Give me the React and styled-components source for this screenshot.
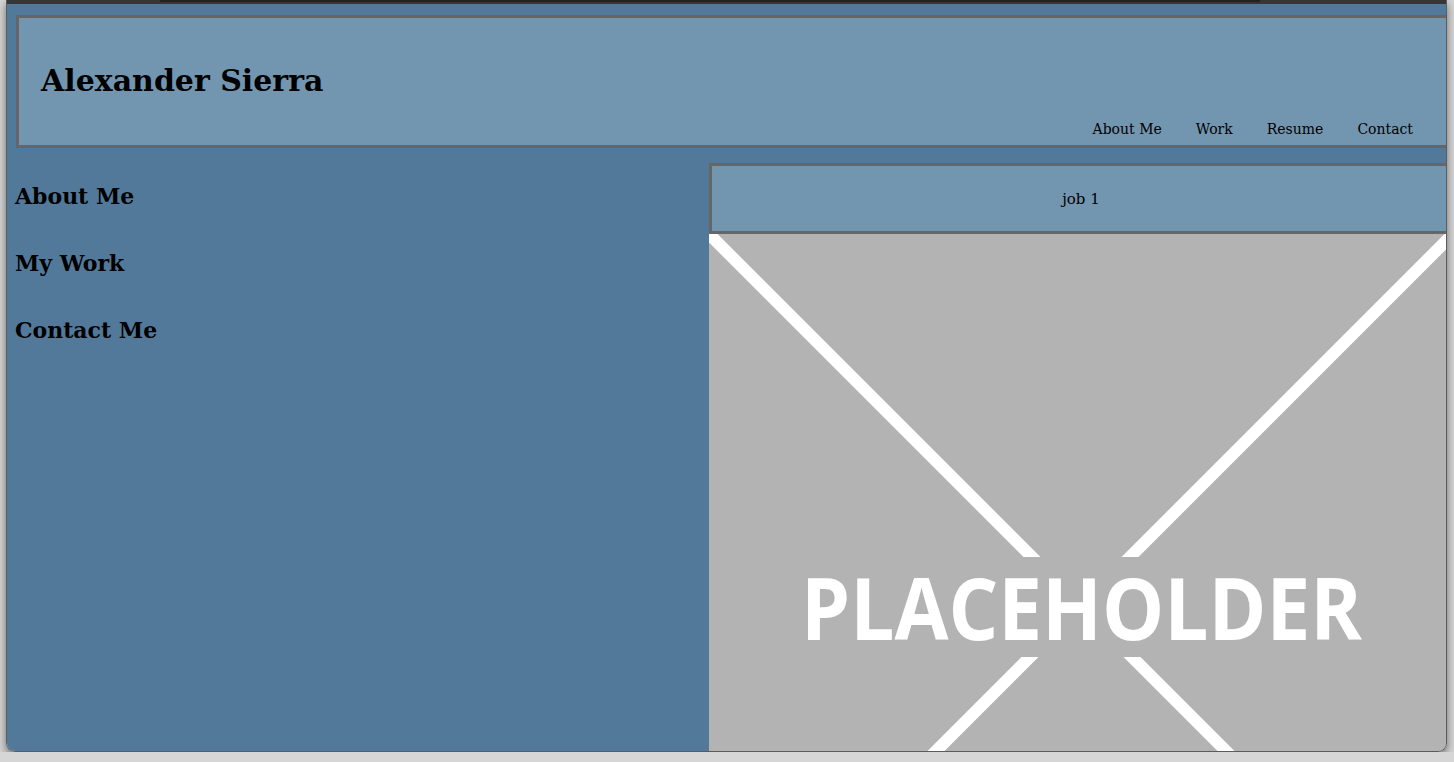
import React from "react";
import styled, { createGlobalStyle } from "styled-components";

const GlobalStyle = createGlobalStyle`
  html, body {
    margin: 0;
    padding: 0;
    background: #d6d6d6;
    overflow: hidden;
  }
`;

const navItems = ["About Me", "Work", "Resume", "Contact"];
const sections = ["About Me", "My Work", "Contact Me"];

const PlaceholderText = styled.text`
  font-family: "Open Sans", Lato, sans-serif;
  font-weight: 700;
  font-size: 86px;
  font-kerning: none;
`;

const Placeholder = () => (
  <svg width="744" height="744" viewBox="0 0 744 744" style={{ display: "block" }}>
    <rect width="744" height="744" fill="#b3b3b3" />
    <line x1="0" y1="0" x2="744" y2="744" stroke="#fff" strokeWidth="12" />
    <line x1="744" y1="0" x2="0" y2="744" stroke="#fff" strokeWidth="12" />
    <rect x="0" y="323" width="744" height="100" fill="#b3b3b3" />
    <PlaceholderText
      x="92"
      y="406"
      fill="#fff"
      textLength="561"
      lengthAdjust="spacingAndGlyphs"
    >
      PLACEHOLDER
    </PlaceholderText>
  </svg>
);

const App = () => {
  return (
    <>
      <GlobalStyle />
      <Frame>
        <TopStrip>
          <span className="tab" />
        </TopStrip>
        <Page>
          <Header>
            <Title>Alexander Sierra</Title>
            <Nav>
              {navItems.map((item) => (
                <NavLink key={item}>{item}</NavLink>
              ))}
            </Nav>
          </Header>
          <Columns>
            <LeftCol>
              {sections.map((s) => (
                <SectionTitle key={s}>{s}</SectionTitle>
              ))}
            </LeftCol>
            <RightCol>
              <JobBox>job 1</JobBox>
              <Placeholder />
            </RightCol>
          </Columns>
        </Page>
      </Frame>
    </>
  );
};

const Frame = styled.div`
  margin-left: 6px;
  width: 1441px;
  height: 752px;
  box-sizing: border-box;
  border: 1px solid #5c5c5c;
  border-top: none;
  border-radius: 0 0 9px 9px;
  overflow: hidden;
  display: flex;
  flex-direction: column;
  box-shadow: 0 4px 10px rgba(0, 0, 0, 0.5);
`;

const TopStrip = styled.div`
  height: 4px;
  background: #363636;
  flex-shrink: 0;
  position: relative;

  .tab {
    position: absolute;
    left: 153px;
    width: 1100px;
    top: 0;
    height: 2px;
    background: #222;
  }
`;

const Page = styled.div`
  flex: 1;
  background: #53799a;
  overflow: hidden;
  font-family: "DejaVu Serif", Georgia, serif;
  color: #000;
`;

const Header = styled.header`
  margin: 11px 0 0 9px;
  width: 1437px;
  height: 133px;
  box-sizing: border-box;
  border: 3px solid #666;
  background: #7396b0;
  padding: 43px 37px 6px 22px;
  display: flex;
  flex-direction: column;
`;

const Title = styled.h1`
  margin: 0;
  font-size: 30px;
  line-height: 40px;
  font-weight: bold;
`;

const Nav = styled.nav`
  margin-top: 18px;
  display: flex;
  justify-content: flex-end;
  gap: 34px;
`;

const NavLink = styled.span`
  font-size: 14px;
  line-height: 20px;
`;

const Columns = styled.div`
  display: flex;
  width: 1446px;
`;

const LeftCol = styled.div`
  width: 702px;
  flex-shrink: 0;
  box-sizing: border-box;
  padding: 34px 0 0 8px;
  display: flex;
  flex-direction: column;
  gap: 39px;
`;

const SectionTitle = styled.h2`
  margin: 0;
  font-size: 22px;
  line-height: 28px;
  font-weight: bold;
`;

const RightCol = styled.div`
  width: 744px;
  flex-shrink: 0;
  padding-top: 15px;
`;

const JobBox = styled.div`
  height: 71px;
  box-sizing: border-box;
  border: 3px solid #666;
  background: #7396b0;
  display: flex;
  align-items: center;
  justify-content: center;
  font-size: 15px;
`;

export default App;
